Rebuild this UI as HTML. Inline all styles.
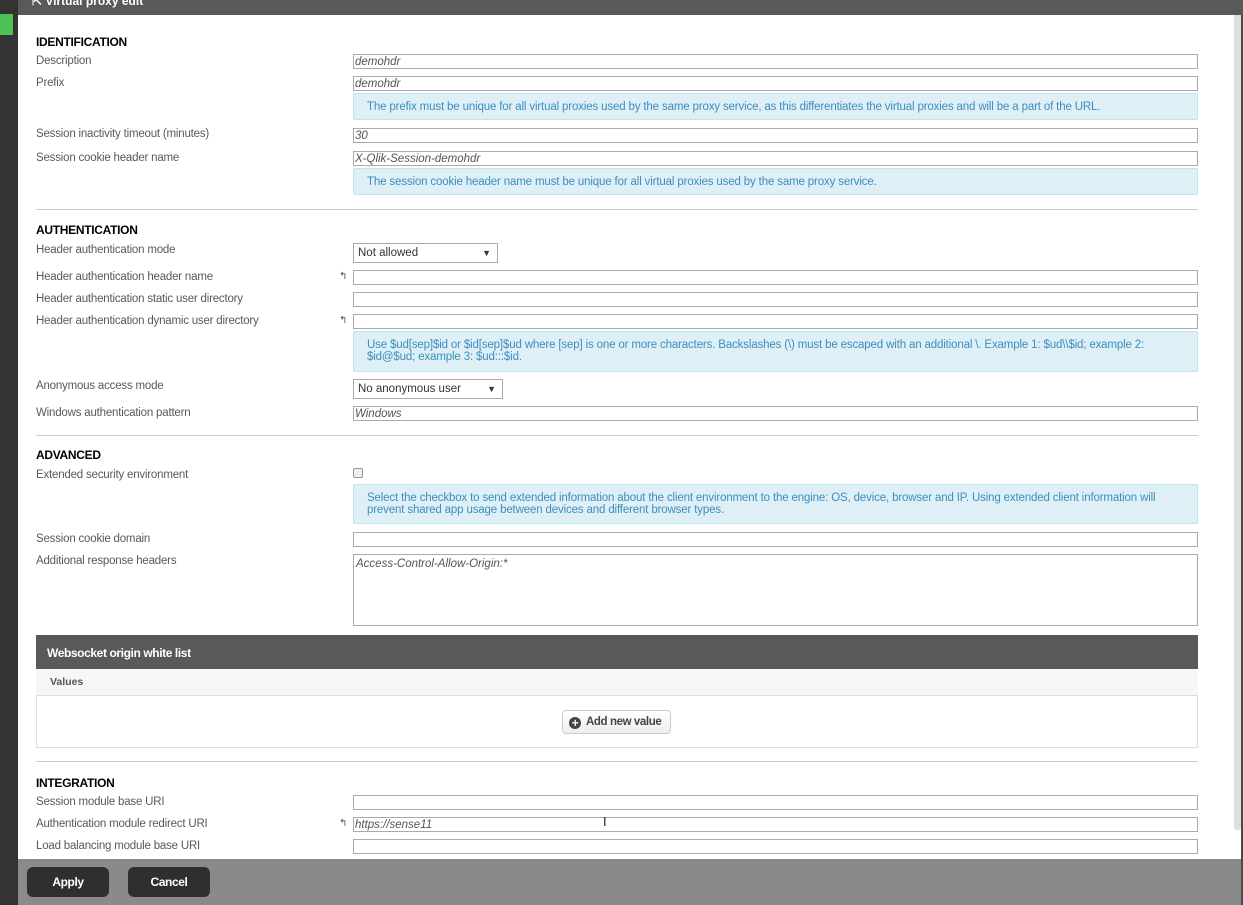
<!DOCTYPE html>
<html><head><meta charset="utf-8"><style>
*{box-sizing:border-box;margin:0;padding:0}
body{width:1243px;height:905px;position:relative;overflow:hidden;background:#fff;font-family:"Liberation Sans",sans-serif;font-size:12px;color:#595959}
.a{position:absolute}
.lbl{position:absolute;left:36px;font-size:11.5px;color:#595959;letter-spacing:-0.2px;white-space:nowrap;margin-top:2px}
.h{position:absolute;left:36px;font-size:12px;font-weight:bold;color:#000;letter-spacing:-0.3px;margin-top:1px}
.in{position:absolute;left:353px;width:845px;height:15px;border:1px solid #aaa;background:#fff;font-style:italic;font-size:11.5px;color:#555;padding-left:1px;line-height:14px;white-space:nowrap}
.info{position:absolute;left:353px;width:845px;background:#dfeff6;border:1px solid #bde6f3;border-radius:2px;color:#3b8ec0;font-size:11.5px;padding:0 13px;line-height:12px;letter-spacing:-0.15px}
.hr{position:absolute;left:36px;width:1162px;height:1px;background:#ccc}
.sel{position:absolute;left:353px;height:20px;border:1px solid #aaa;font-size:11.5px;color:#333;padding-left:4px;line-height:18px}
.sel span{position:absolute;right:6px;top:0;font-size:9px}
.rev{position:absolute;left:339px;font-size:10px;color:#555}
.btn{position:absolute;top:867px;height:30px;width:82px;background:#2f2f2f;border-radius:6px;color:#fff;font-weight:bold;font-size:12px;text-align:center;line-height:30px;letter-spacing:-0.4px}
</style></head><body>
<div class="a" style="left:0;top:0;width:18px;height:905px;background:#333"></div>
<div class="a" style="left:0;top:14px;width:13px;height:21px;background:#4dc153"></div>
<div class="a" style="left:18px;top:0;width:1225px;height:15px;background:#595959"></div>
<div class="a" style="left:32px;top:-6px;color:#fff;font-weight:bold;font-size:12px">⇱ Virtual proxy edit</div>
<div class="a" style="left:1234px;top:15px;width:7px;height:815px;background:#dedede;border-radius:0 0 3px 3px"></div>
<div class="a" style="left:1241px;top:15px;width:2px;height:890px;background:#4a4a4a"></div>

<div class="h" style="top:34px">IDENTIFICATION</div>
<div class="lbl" style="top:53px">Description</div>
<div class="in" style="top:54px">demohdr</div>
<div class="lbl" style="top:75px">Prefix</div>
<div class="in" style="top:76px">demohdr</div>
<div class="info" style="top:93px;height:27px;line-height:27px">The prefix must be unique for all virtual proxies used by the same proxy service, as this differentiates the virtual proxies and will be a part of the URL.</div>
<div class="lbl" style="top:126px">Session inactivity timeout (minutes)</div>
<div class="in" style="top:128px">30</div>
<div class="lbl" style="top:150px">Session cookie header name</div>
<div class="in" style="top:151px">X-Qlik-Session-demohdr</div>
<div class="info" style="top:168px;height:27px;line-height:27px">The session cookie header name must be unique for all virtual proxies used by the same proxy service.</div>
<div class="hr" style="top:209px"></div>

<div class="h" style="top:222px">AUTHENTICATION</div>
<div class="lbl" style="top:242px">Header authentication mode</div>
<div class="sel" style="top:243px;width:145px">Not allowed<span>▼</span></div>
<div class="lbl" style="top:269px">Header authentication header name</div>
<div class="rev" style="top:271px">↰</div>
<div class="in" style="top:270px"></div>
<div class="lbl" style="top:291px">Header authentication static user directory</div>
<div class="in" style="top:292px"></div>
<div class="lbl" style="top:313px">Header authentication dynamic user directory</div>
<div class="rev" style="top:315px">↰</div>
<div class="in" style="top:314px"></div>
<div class="info" style="top:331px;height:41px;padding-top:7px">Use $ud[sep]$id or $id[sep]$ud where [sep] is one or more characters. Backslashes (\) must be escaped with an additional \. Example 1: $ud\\$id; example 2: $id@$ud; example 3: $ud:::$id.</div>
<div class="lbl" style="top:378px">Anonymous access mode</div>
<div class="sel" style="top:379px;width:150px">No anonymous user<span>▼</span></div>
<div class="lbl" style="top:405px">Windows authentication pattern</div>
<div class="in" style="top:406px">Windows</div>
<div class="hr" style="top:435px"></div>

<div class="h" style="top:447px">ADVANCED</div>
<div class="lbl" style="top:467px">Extended security environment</div>
<div class="a" style="left:353px;top:468px;width:10px;height:10px;border:1px solid #999;border-radius:2px;background:#eee"></div>
<div class="info" style="top:484px;height:40px;padding-top:7px">Select the checkbox to send extended information about the client environment to the engine: OS, device, browser and IP. Using extended client information will prevent shared app usage between devices and different browser types.</div>
<div class="lbl" style="top:531px">Session cookie domain</div>
<div class="in" style="top:532px"></div>
<div class="lbl" style="top:553px">Additional response headers</div>
<div class="in" style="top:554px;height:72px;padding:2px">Access-Control-Allow-Origin:*</div>

<div class="a" style="left:36px;top:635px;width:1162px;height:34px;background:#595959;color:#fff;font-weight:bold;font-size:12px;line-height:36px;padding-left:11px;letter-spacing:-0.4px">Websocket origin white list</div>
<div class="a" style="left:36px;top:669px;width:1162px;height:27px;background:#f6f6f6;border-bottom:1px solid #ddd;font-weight:bold;font-size:10.5px;color:#555;padding-left:14px;line-height:26px">Values</div>
<div class="a" style="left:36px;top:696px;width:1162px;height:52px;border:1px solid #ddd;border-top:none"></div>
<div class="a" style="left:562px;top:710px;width:109px;height:24px;border:1px solid #ccc;border-radius:4px;background:linear-gradient(#fff,#eee);font-weight:bold;font-size:11.5px;color:#444;line-height:22px;padding-left:6px;letter-spacing:-0.4px"><span style="display:inline-block;width:12px;height:12px;border-radius:50%;background:#444;color:#fff;font-size:12px;line-height:12px;text-align:center;vertical-align:-2px;margin-right:5px">+</span>Add new value</div>
<div class="hr" style="top:761px"></div>

<div class="h" style="top:775px">INTEGRATION</div>
<div class="lbl" style="top:794px">Session module base URI</div>
<div class="in" style="top:795px"></div>
<div class="lbl" style="top:816px">Authentication module redirect URI</div>
<div class="rev" style="top:818px">↰</div>
<div class="in" style="top:817px">https://sense11</div>
<div class="a" style="left:603px;top:814px;font-size:13px;color:#222">I</div>
<div class="lbl" style="top:838px">Load balancing module base URI</div>
<div class="in" style="top:839px"></div>

<div class="a" style="left:18px;top:859px;width:1223px;height:46px;background:#8a8a8a"></div>
<div class="btn" style="left:27px">Apply</div>
<div class="btn" style="left:128px">Cancel</div>
</body></html>
